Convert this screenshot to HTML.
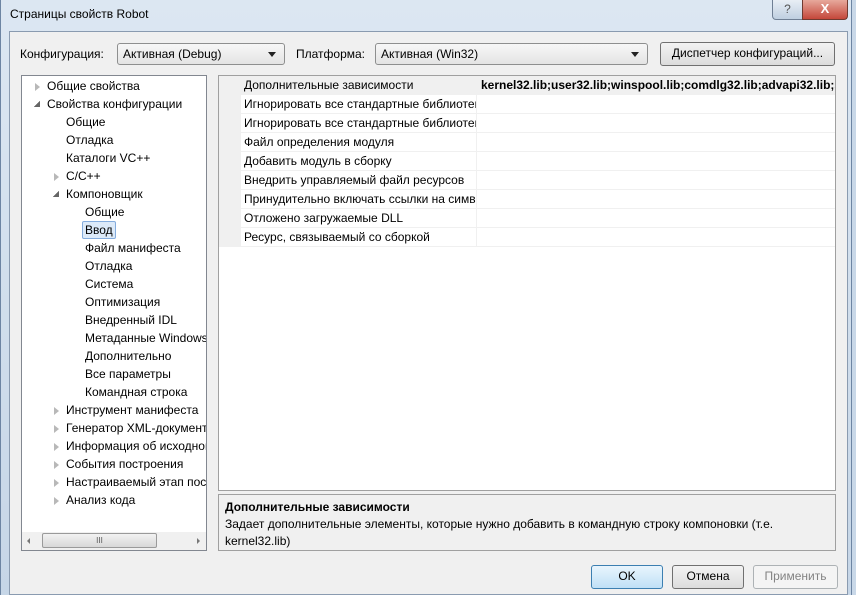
<!DOCTYPE html><html><head><meta charset="utf-8"><style>
*{box-sizing:border-box;margin:0;padding:0}
body{width:856px;height:595px;overflow:hidden;position:relative;background:#c9d8e8;font-family:"Liberation Sans","DejaVu Sans",sans-serif;font-size:12px;color:#000}
.a{position:absolute;white-space:nowrap}
.frame{position:absolute;left:0;top:0;width:852px;height:595px;background:linear-gradient(#dce7f2,#c6d6e7);border-left:1px solid #6d85a3;border-right:1px solid #6d85a3}
.body{position:absolute;left:9px;top:31px;width:839px;height:564px;background:#f0f0f0;border:1px solid #8a9bb0}
.combo{position:absolute;height:22px;background:linear-gradient(#f7f7f7,#e4e4e4);border:1px solid #8e8f8f;border-radius:3px;padding:3px 5px;font-size:12px}
.combo:after{content:"";position:absolute;right:8px;top:8px;border:4px solid transparent;border-top:5px solid #222}
.btn{position:absolute;height:24px;background:linear-gradient(#f3f3f3,#dcdcdc);border:1px solid #707070;border-radius:3px;text-align:center;line-height:21px}
.tree{position:absolute;left:21px;top:75px;width:186px;height:476px;background:#fff;border:1px solid #828790;overflow:hidden}
.ti{position:absolute;white-space:nowrap;font-size:12px}
.ar{position:absolute;width:0;height:0;border-top:4px solid transparent;border-bottom:4px solid transparent;border-left:5px solid #a6a6a6;opacity:.8}
.ar.o{border:none;width:6px;height:6px;background:linear-gradient(135deg,transparent 50%,#404040 50%)}
.grid{position:absolute;left:218px;top:75px;width:618px;height:416px;background:#fff;border:1px solid #a0a0a0}
.row{position:absolute;left:0;width:616px;height:19px;border-bottom:1px solid #f0f0f0}
.row span{position:absolute;left:25px;top:2px;width:232px;overflow:hidden;white-space:nowrap}
.desc{position:absolute;left:218px;top:494px;width:618px;height:57px;border:1px solid #a0a0a0;background:#f0f0f0;padding:4px 6px;line-height:17px}
</style></head><body>
<div class="frame"></div>
<div class="a" style="left:10px;top:7px;font-size:12px">Страницы свойств Robot</div>
<div class="a" style="left:772px;top:0;width:31px;height:20px;background:linear-gradient(#e8eef5,#bfcfe0);border:1px solid #6f7f94;border-top:none;border-radius:0 0 0 4px;text-align:center;color:#555;font-size:12px;line-height:18px">?</div>
<div class="a" style="left:802px;top:0;width:46px;height:20px;background:linear-gradient(#e7a99c,#c4473a);border:1px solid #6f3a30;border-top:none;border-radius:0 0 4px 0;text-align:center;color:#fff;font-weight:bold;font-size:13px;line-height:18px">X</div>
<div class="body"></div>
<div class="a" style="left:20px;top:47px">Конфигурация:</div>
<div class="combo" style="left:117px;top:43px;width:168px">Активная (Debug)</div>
<div class="a" style="left:296px;top:47px">Платформа:</div>
<div class="combo" style="left:375px;top:43px;width:273px">Активная (Win32)</div>
<div class="btn" style="left:660px;top:42px;width:175px">Диспетчер конфигураций...</div>
<div class="tree">
<div class="ar" style="left:13px;top:7px"></div><div class="ti" style="left:25px;top:3px">Общие свойства</div>
<div class="ar o" style="left:12px;top:25px"></div><div class="ti" style="left:25px;top:21px">Свойства конфигурации</div>
<div class="ti" style="left:44px;top:39px">Общие</div>
<div class="ti" style="left:44px;top:57px">Отладка</div>
<div class="ti" style="left:44px;top:75px">Каталоги VC++</div>
<div class="ar" style="left:32px;top:97px"></div><div class="ti" style="left:44px;top:93px">C/C++</div>
<div class="ar o" style="left:31px;top:115px"></div><div class="ti" style="left:44px;top:111px">Компоновщик</div>
<div class="ti" style="left:63px;top:129px">Общие</div>
<div class="ti" style="left:60px;top:145px;padding:1px 2px;background:#dceaf9;border:1px solid #84acdd;border-radius:2px">Ввод</div>
<div class="ti" style="left:63px;top:165px">Файл манифеста</div>
<div class="ti" style="left:63px;top:183px">Отладка</div>
<div class="ti" style="left:63px;top:201px">Система</div>
<div class="ti" style="left:63px;top:219px">Оптимизация</div>
<div class="ti" style="left:63px;top:237px">Внедренный IDL</div>
<div class="ti" style="left:63px;top:255px">Метаданные Windows</div>
<div class="ti" style="left:63px;top:273px">Дополнительно</div>
<div class="ti" style="left:63px;top:291px">Все параметры</div>
<div class="ti" style="left:63px;top:309px">Командная строка</div>
<div class="ar" style="left:32px;top:331px"></div><div class="ti" style="left:44px;top:327px">Инструмент манифеста</div>
<div class="ar" style="left:32px;top:349px"></div><div class="ti" style="left:44px;top:345px">Генератор XML-документов</div>
<div class="ar" style="left:32px;top:367px"></div><div class="ti" style="left:44px;top:363px">Информация об исходном</div>
<div class="ar" style="left:32px;top:385px"></div><div class="ti" style="left:44px;top:381px">События построения</div>
<div class="ar" style="left:32px;top:403px"></div><div class="ti" style="left:44px;top:399px">Настраиваемый этап пос</div>
<div class="ar" style="left:32px;top:421px"></div><div class="ti" style="left:44px;top:417px">Анализ кода</div>
<div style="position:absolute;left:0;top:456px;width:184px;height:18px;background:#f0f0f0">
<div style="position:absolute;left:5px;top:6px;border-top:3px solid transparent;border-bottom:3px solid transparent;border-right:3px solid #777"></div>
<div style="position:absolute;left:20px;top:1px;width:115px;height:15px;background:linear-gradient(#f2f2f2,#d8d8d8);border:1px solid #9a9a9a;border-radius:2px;text-align:center;font-size:8px;line-height:13px;color:#555">III</div>
<div style="position:absolute;left:175px;top:6px;border-top:3px solid transparent;border-bottom:3px solid transparent;border-left:3px solid #777"></div>
</div>
</div>
<div class="grid">
<div style="position:absolute;left:0;top:0;width:22px;height:171px;background:#f0f0f0"></div>
<div class="row" style="top:0;background:#f0f0f0"><span>Дополнительные зависимости</span><b style="position:absolute;left:262px;top:2px;white-space:nowrap;width:354px;overflow:hidden">kernel32.lib;user32.lib;winspool.lib;comdlg32.lib;advapi32.lib;shell32.lib</b></div>
<div class="row" style="top:19px"><span>Игнорировать все стандартные библиотеки</span></div>
<div class="row" style="top:38px"><span>Игнорировать все стандартные библиотеки</span></div>
<div class="row" style="top:57px"><span>Файл определения модуля</span></div>
<div class="row" style="top:76px"><span>Добавить модуль в сборку</span></div>
<div class="row" style="top:95px"><span>Внедрить управляемый файл ресурсов</span></div>
<div class="row" style="top:114px"><span>Принудительно включать ссылки на символы</span></div>
<div class="row" style="top:133px"><span>Отложено загружаемые DLL</span></div>
<div class="row" style="top:152px"><span>Ресурс, связываемый со сборкой</span></div>
<div style="position:absolute;left:257px;top:19px;width:1px;height:152px;background:#f0f0f0"></div>
</div>
<div class="desc"><b>Дополнительные зависимости</b><br>Задает дополнительные элементы, которые нужно добавить в командную строку компоновки (т.е.<br>kernel32.lib)</div>
<div class="btn" style="left:591px;top:565px;width:72px;background:linear-gradient(#e9f5fd,#bfe0f6);border-color:#3c7fb1">OK</div>
<div class="btn" style="left:672px;top:565px;width:72px">Отмена</div>
<div class="btn" style="left:753px;top:565px;width:85px;background:#f4f4f4;border-color:#adb2b5;color:#838383">Применить</div>
</body></html>
